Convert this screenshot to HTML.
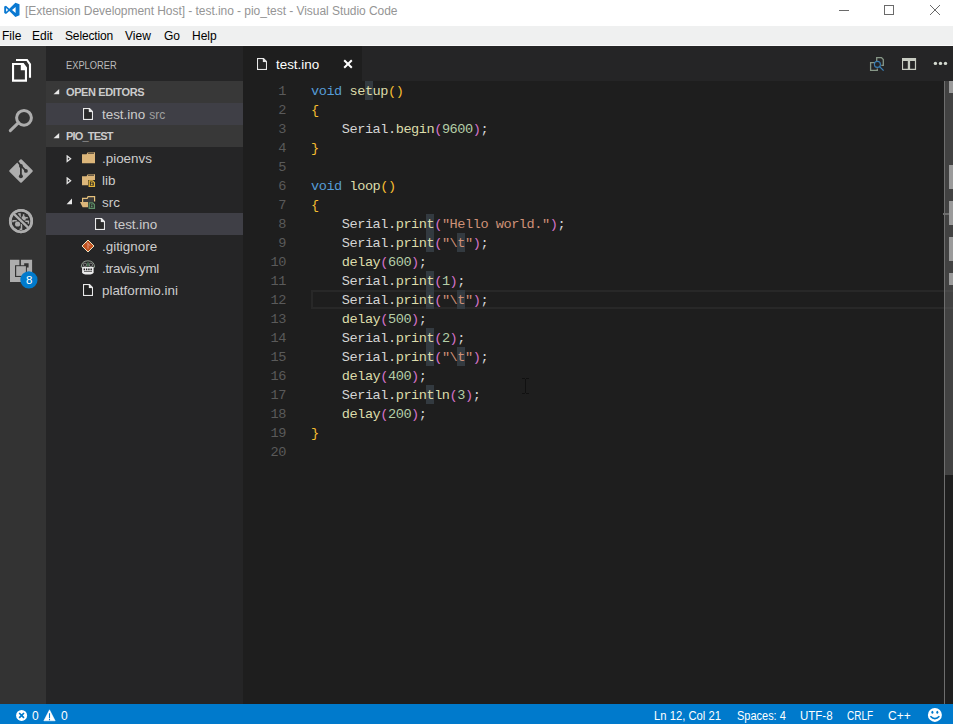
<!DOCTYPE html>
<html><head><meta charset="utf-8">
<style>
*{margin:0;padding:0;box-sizing:border-box}
html,body{width:953px;height:724px;overflow:hidden;background:#1e1e1e;font-family:"Liberation Sans",sans-serif}
.a{position:absolute;white-space:pre}
#title{left:0;top:0;width:953px;height:26px;background:#fff}
#menu{left:0;top:26px;width:953px;height:19px;background:#eff0f0}
#mline{left:0;top:45px;width:953px;height:1px;background:#fafafa}
#act{left:0;top:46px;width:46px;height:658px;background:#333}
#side{left:46px;top:46px;width:197px;height:658px;background:#252526}
#tabs{left:243px;top:46px;width:710px;height:35px;background:#252526}
#tab{left:243px;top:46px;width:119px;height:35px;background:#1e1e1e}
#editor{left:243px;top:81px;width:710px;height:623px;background:#1e1e1e}
#status{left:0;top:704px;width:953px;height:20px;background:#007acc}
.tt{font-size:12px;color:#959595;top:4px;letter-spacing:-0.05px}
.mi{font-size:12px;color:#000;top:29px}
.code{font-family:"Liberation Mono",monospace;font-size:13.6px;letter-spacing:-0.46px;color:#d4d4d4}
.ln{font-family:"Liberation Mono",monospace;font-size:13.6px;letter-spacing:-0.46px;color:#5a5a5a;width:30px;text-align:right;left:256px}
.kw{color:#569cd6}.fn{color:#dcdcaa}.nm{color:#b5cea8}.st{color:#ce9178}.b1{color:#f5bd30}.b2{color:#d572c8}
.sh{font-size:11px;font-weight:bold;color:#cccccc;letter-spacing:-0.4px}
.fi{font-size:13.4px;color:#cccccc}
.hl{width:8px;height:19px;background:#333a40}
.es{color:#d7ba7d}
.code,.ln{line-height:19px;height:19px}
.sb{font-size:12px;color:#fff;top:709px}
</style></head><body>
<div class="a" id="title"></div>
<div class="a" id="menu"></div>
<div class="a" id="mline"></div>
<div class="a" id="act"></div>
<div class="a" id="side"></div>
<div class="a" id="tabs"></div>
<div class="a" id="tab"></div>
<div class="a" id="editor"></div>
<div class="a" id="status"></div>

<!-- title -->
<svg class="a" style="left:0px;top:0px" width="24" height="22" viewBox="0 0 24 22">
<path d="M15.4 2.7 L19.5 4.3 V15.3 L15.4 16.9 L9.3 11.1 L6 13.9 L4.2 13.1 V6.6 L6 5.8 L9.3 8.7 Z M15.6 7 L12 9.9 L15.6 12.9 Z M6.1 8 V11.8 L8.2 9.9 Z" fill="#0a79d2" fill-rule="evenodd"/>
</svg>
<div class="a tt" style="left:25px">[Extension Development Host] - test.ino - pio_test - Visual Studio Code</div>
<!-- window controls -->
<div class="a" style="left:839px;top:10px;width:10px;height:1px;background:#6a6a6a"></div>
<div class="a" style="left:884px;top:5px;width:10px;height:10px;border:1px solid #6a6a6a"></div>
<svg class="a" style="left:929px;top:4px" width="12" height="12" viewBox="0 0 12 12"><path d="M1 1 L11 11 M11 1 L1 11" stroke="#6a6a6a" stroke-width="1"/></svg>

<!-- menu -->
<div class="a mi" style="left:2px">File</div>
<div class="a mi" style="left:32px">Edit</div>
<div class="a mi" style="left:65px;letter-spacing:-0.15px">Selection</div>
<div class="a mi" style="left:125px">View</div>
<div class="a mi" style="left:164px">Go</div>
<div class="a mi" style="left:192px">Help</div>

<!-- sidebar -->
<div class="a" style="left:66px;top:59px;font-size:11px;color:#bbbbbb;transform:scaleX(0.845);transform-origin:0 0">EXPLORER</div>
<div class="a" style="left:46px;top:81px;width:197px;height:22px;background:#383838"></div>
<div class="a" style="left:46px;top:103px;width:197px;height:22px;background:#3f3f46"></div>
<div class="a" style="left:46px;top:125px;width:197px;height:22px;background:#383838"></div>
<div class="a" style="left:46px;top:213px;width:197px;height:22px;background:#3f3f46"></div>
<div class="a sh" style="left:66px;top:86px">OPEN EDITORS</div>
<div class="a sh" style="left:66px;top:130px;letter-spacing:-0.8px">PIO_TEST</div>
<div class="a fi" style="left:102px;top:107px">test.ino<span style="font-size:12px;color:#a0a0a0;margin-left:4px">src</span></div>
<div class="a fi" style="left:102px;top:151px">.pioenvs</div>
<div class="a fi" style="left:102px;top:173px">lib</div>
<div class="a fi" style="left:102px;top:195px">src</div>
<div class="a fi" style="left:114px;top:217px">test.ino</div>
<div class="a fi" style="left:102px;top:239px">.gitignore</div>
<div class="a fi" style="left:102px;top:261px;letter-spacing:-0.3px">.travis.yml</div>
<div class="a fi" style="left:102px;top:283px">platformio.ini</div>

<!-- tab -->
<div class="a fi" style="left:276px;top:57px;color:#fff">test.ino</div>

<!-- editor -->
<div class="a" style="left:311px;top:290px;width:700px;height:19px;border:2px solid #282828"></div>
<div id="lines">
<div class="a hl" style="left:365px;top:81px"></div>
<div class="a hl" style="left:426px;top:214px"></div>
<div class="a hl" style="left:426px;top:233px"></div>
<div class="a hl" style="left:457px;top:233px"></div>
<div class="a hl" style="left:426px;top:271px"></div>
<div class="a hl" style="left:426px;top:290px"></div>
<div class="a hl" style="left:457px;top:290px"></div>
<div class="a hl" style="left:426px;top:328px"></div>
<div class="a hl" style="left:426px;top:347px"></div>
<div class="a hl" style="left:457px;top:347px"></div>
<div class="a hl" style="left:426px;top:385px"></div>
<div class="a ln" style="top:82px">1</div>
<div class="a code" style="left:311px;top:82px"><span class="kw">void</span> <span class="fn">setup</span><span class="b1">()</span></div>
<div class="a ln" style="top:101px">2</div>
<div class="a code" style="left:311px;top:101px"><span class="b1">{</span></div>
<div class="a ln" style="top:120px">3</div>
<div class="a code" style="left:311px;top:120px">    Serial.<span class="fn">begin</span><span class="b2">(</span><span class="nm">9600</span><span class="b2">)</span>;</div>
<div class="a ln" style="top:139px">4</div>
<div class="a code" style="left:311px;top:139px"><span class="b1">}</span></div>
<div class="a ln" style="top:158px">5</div>
<div class="a ln" style="top:177px">6</div>
<div class="a code" style="left:311px;top:177px"><span class="kw">void</span> <span class="fn">loop</span><span class="b1">()</span></div>
<div class="a ln" style="top:196px">7</div>
<div class="a code" style="left:311px;top:196px"><span class="b1">{</span></div>
<div class="a ln" style="top:215px">8</div>
<div class="a code" style="left:311px;top:215px">    Serial.<span class="fn">print</span><span class="b2">(</span><span class="st">"Hello world."</span><span class="b2">)</span>;</div>
<div class="a ln" style="top:234px">9</div>
<div class="a code" style="left:311px;top:234px">    Serial.<span class="fn">print</span><span class="b2">(</span><span class="st">"\t"</span><span class="b2">)</span>;</div>
<div class="a ln" style="top:253px">10</div>
<div class="a code" style="left:311px;top:253px">    <span class="fn">delay</span><span class="b2">(</span><span class="nm">600</span><span class="b2">)</span>;</div>
<div class="a ln" style="top:272px">11</div>
<div class="a code" style="left:311px;top:272px">    Serial.<span class="fn">print</span><span class="b2">(</span><span class="nm">1</span><span class="b2">)</span>;</div>
<div class="a ln" style="top:291px">12</div>
<div class="a code" style="left:311px;top:291px">    Serial.<span class="fn">print</span><span class="b2">(</span><span class="st">"\t"</span><span class="b2">)</span>;</div>
<div class="a ln" style="top:310px">13</div>
<div class="a code" style="left:311px;top:310px">    <span class="fn">delay</span><span class="b2">(</span><span class="nm">500</span><span class="b2">)</span>;</div>
<div class="a ln" style="top:329px">14</div>
<div class="a code" style="left:311px;top:329px">    Serial.<span class="fn">print</span><span class="b2">(</span><span class="nm">2</span><span class="b2">)</span>;</div>
<div class="a ln" style="top:348px">15</div>
<div class="a code" style="left:311px;top:348px">    Serial.<span class="fn">print</span><span class="b2">(</span><span class="st">"\t"</span><span class="b2">)</span>;</div>
<div class="a ln" style="top:367px">16</div>
<div class="a code" style="left:311px;top:367px">    <span class="fn">delay</span><span class="b2">(</span><span class="nm">400</span><span class="b2">)</span>;</div>
<div class="a ln" style="top:386px">17</div>
<div class="a code" style="left:311px;top:386px">    Serial.<span class="fn">println</span><span class="b2">(</span><span class="nm">3</span><span class="b2">)</span>;</div>
<div class="a ln" style="top:405px">18</div>
<div class="a code" style="left:311px;top:405px">    <span class="fn">delay</span><span class="b2">(</span><span class="nm">200</span><span class="b2">)</span>;</div>
<div class="a ln" style="top:424px">19</div>
<div class="a code" style="left:311px;top:424px"><span class="b1">}</span></div>
<div class="a ln" style="top:443px">20</div>
</div><!--/lines-->


<!-- activity bar icons -->
<svg class="a" style="left:8px;top:56px" width="28" height="28" viewBox="0 0 28 28">
<path d="M8 4 H19 L22 8.3 V21.8" fill="none" stroke="#fff" stroke-width="2.1"/>
<path d="M4 7 H15.6 L19 11.6 V25.7 H4 Z M6.1 9.1 V23.6 H16.9 V14.3 H12.8 V9.1 Z" fill="#fff" fill-rule="evenodd"/>
</svg>
<svg class="a" style="left:6px;top:106px" width="30" height="30" viewBox="0 0 30 30">
<circle cx="18" cy="11.8" r="7.4" fill="none" stroke="#adadad" stroke-width="3"/>
<path d="M4.3 24.6 L12.5 16.6" stroke="#adadad" stroke-width="3" stroke-linecap="round"/>
</svg>
<svg class="a" style="left:6px;top:156px" width="30" height="30" viewBox="0 0 30 30">
<path d="M14.3 3.5 Q15 2.8 15.7 3.5 L26.5 14.3 Q27.2 15 26.5 15.7 L15.7 26.5 Q15 27.2 14.3 26.5 L3.5 15.7 Q2.8 15 3.5 14.3 Z" fill="#adadad"/>
<path d="M11.4 5.2 L14.9 9.7 V20.3 M14.9 9.7 L19.9 14.9" stroke="#333" stroke-width="1.8" fill="none"/>
<circle cx="14.9" cy="9.9" r="1.9" fill="#333"/>
<circle cx="14.9" cy="20.3" r="2" fill="#333"/>
<circle cx="19.9" cy="14.9" r="1.9" fill="#333"/>
</svg>
<svg class="a" style="left:6px;top:206px" width="30" height="30" viewBox="0 0 30 30">
<circle cx="15" cy="15.1" r="10.8" fill="none" stroke="#adadad" stroke-width="2.5"/>
<path d="M12.2 8 H14 V12.2 M17.6 8.2 V10.5 M19.2 11.8 H21.8 M19.2 15.2 H22.4 V17.8 M6.4 14.8 H10.8 M7 14.8 V16.2 M15.5 18 V23.2 H13.6" stroke="#adadad" stroke-width="1.5" fill="none"/>
<circle cx="17.6" cy="12.4" r="2.3" fill="#adadad"/>
<circle cx="11.6" cy="18" r="2.6" fill="#adadad"/>
<path d="M7.6 7.6 L22.4 21.8" stroke="#333" stroke-width="4.2"/>
<path d="M7.6 7.6 L22.4 21.8" stroke="#adadad" stroke-width="2.3"/>
<circle cx="15" cy="15.1" r="10.8" fill="none" stroke="#adadad" stroke-width="2.5"/>
</svg>
<svg class="a" style="left:6px;top:254px" width="34" height="36" viewBox="0 0 34 36">
<path d="M4 5.7 H13.4 V11.2 H9 V22.9 H20.9 V13.4 H22.6 V9.2 H18.2 V11.2 H14.9 V5.7 H26.1 V27.9 H4 Z" fill="#adadad"/>
<rect x="10.2" y="12.2" width="9.7" height="9.7" fill="#adadad"/>
<circle cx="22.9" cy="25.9" r="8.6" fill="#007acc"/>
</svg>
<div class="a" style="left:26px;top:274px;font-size:11.5px;color:#fff">8</div>

<!-- sidebar icons -->
<svg class="a" style="left:53px;top:89px" width="7" height="6" viewBox="0 0 7 6"><path d="M0.5 5.2 H6.2 V0 Z" fill="#e8e8e8"/></svg>
<svg class="a" style="left:53px;top:133px" width="7" height="6" viewBox="0 0 7 6"><path d="M0.5 5.2 H6.2 V0 Z" fill="#e8e8e8"/></svg>
<svg class="a" style="left:66px;top:155px" width="6" height="8" viewBox="0 0 6 8"><path d="M1.2 1 L4.6 3.7 L1.2 6.4 Z" fill="none" stroke="#e4e4e4" stroke-width="1.3"/></svg>
<svg class="a" style="left:66px;top:177px" width="6" height="8" viewBox="0 0 6 8"><path d="M1.2 1 L4.6 3.7 L1.2 6.4 Z" fill="none" stroke="#e4e4e4" stroke-width="1.3"/></svg>
<svg class="a" style="left:66px;top:198px" width="7" height="7" viewBox="0 0 7 7"><path d="M0.6 6.2 H6 V0.6 Z" fill="#e8e8e8"/></svg>

<svg class="a" style="left:82.5px;top:107.5px" width="11" height="13" viewBox="0 0 11 13">
<path d="M0 0 H6.8 L10 3.2 V12 H0 Z M1.2 1.2 V10.8 H8.8 V4.3 H5.6 V1.2 Z" fill="#e8e8e8" fill-rule="evenodd"/><path d="M1.2 1.2 V10.8 H8.8 V4.3 H5.6 V1.2 Z" fill="#2a2a2a"/></svg><svg class="a" style="left:94.5px;top:217.5px" width="11" height="13" viewBox="0 0 11 13">
<path d="M0 0 H6.8 L10 3.2 V12 H0 Z M1.2 1.2 V10.8 H8.8 V4.3 H5.6 V1.2 Z" fill="#e8e8e8" fill-rule="evenodd"/><path d="M1.2 1.2 V10.8 H8.8 V4.3 H5.6 V1.2 Z" fill="#2a2a2a"/></svg><svg class="a" style="left:82.5px;top:284px" width="11" height="13" viewBox="0 0 11 13">
<path d="M0 0 H6.8 L10 3.2 V12 H0 Z M1.2 1.2 V10.8 H8.8 V4.3 H5.6 V1.2 Z" fill="#e8e8e8" fill-rule="evenodd"/><path d="M1.2 1.2 V10.8 H8.8 V4.3 H5.6 V1.2 Z" fill="#222222"/></svg><svg class="a" style="left:81px;top:152px" width="15" height="13" viewBox="0 0 15 13">
<path d="M1 2.2 H5.5 L6.8 0.2 H14 V11.2 H1 Z" fill="#dcb67a"/><path d="M7 1.2 H13" stroke="#252526" stroke-width="0.9"/></svg><svg class="a" style="left:81px;top:174px" width="15" height="13" viewBox="0 0 15 13">
<path d="M1 2.2 H5.5 L6.8 0.2 H14 V11.2 H1 Z" fill="#dcb67a"/><path d="M7 1.2 H13" stroke="#252526" stroke-width="0.9"/></svg><svg class="a" style="left:88px;top:179.5px" width="8" height="8" viewBox="0 0 8 8">
<rect x="-0.2" y="-0.2" width="7.4" height="7.4" fill="#252526"/>
<path d="M1.2 0.8 H4.6 L6.4 2.6 V6.4 H1.2 Z" fill="none" stroke="#e5b53a" stroke-width="1.3"/>
<path d="M2.8 2.9 H4.6 M2.8 4.6 H4.6" stroke="#e5b53a" stroke-width="1.1"/></svg><svg class="a" style="left:79px;top:195px" width="17" height="13" viewBox="0 0 17 13">
<path d="M3.6 8.5 V3.4 H8.2 L9 1.6 H15.6 V6.4" fill="#3a3a3a" stroke="#e5c07b" stroke-width="1.2"/>
<path d="M1 7 H11 V12.2 H3.6 Z" fill="#dcb67a"/></svg><svg class="a" style="left:88px;top:201.5px" width="8" height="8" viewBox="0 0 8 8">
<rect x="-0.2" y="-0.2" width="7.4" height="7.4" fill="#252526"/>
<path d="M1.2 0.8 H4.6 L6.4 2.6 V6.4 H1.2 Z" fill="none" stroke="#5f9068" stroke-width="1.3"/>
<path d="M2.8 2.9 H4.6 M2.8 4.6 H4.6" stroke="#5f9068" stroke-width="1.1"/></svg><svg class="a" style="left:81px;top:239px" width="14" height="14" viewBox="0 0 14 14">
<path d="M7 1 L13 7 L7 13 L1 7 Z" fill="#c0521f" stroke="#ede3c0" stroke-width="1"/>
<path d="M5.6 3.2 L9.2 6.8 M7 4.6 V9.6" stroke="#e29a86" stroke-width="1"/></svg><svg class="a" style="left:78px;top:258px" width="20" height="20" viewBox="0 0 20 20">
<path d="M3.2 9.2 Q3.4 2.9 9.9 2.8 Q16.4 2.9 16.6 9.2 Z" fill="#262626" stroke="#8e9a8e" stroke-width="1"/>
<circle cx="6.9" cy="6.8" r="1.7" fill="none" stroke="#8a8a8a" stroke-width="0.9"/>
<circle cx="12.9" cy="6.8" r="1.7" fill="none" stroke="#8a8a8a" stroke-width="0.9"/>
<rect x="9.2" y="4.4" width="1.6" height="4" fill="#4d7a58"/>
<path d="M4.1 9 H15.6 V14.2 Q15.4 16.6 9.9 16.6 Q4.3 16.6 4.1 14.2 Z" fill="#ececec"/>
<path d="M5.6 11.4 H14.4" stroke="#1e1e1e" stroke-width="1.7" stroke-dasharray="1.4 0.9"/>
<path d="M6 13.4 H14" stroke="#3a3a3a" stroke-width="0.8"/>
</svg>
<div class="a" style="left:525px;top:379px;width:1px;height:14px;background:#111"></div>
<div class="a" style="left:522px;top:378px;width:3px;height:1px;background:#111"></div>
<div class="a" style="left:526px;top:378px;width:3px;height:1px;background:#111"></div>
<div class="a" style="left:522px;top:393px;width:3px;height:1px;background:#111"></div>
<div class="a" style="left:526px;top:393px;width:3px;height:1px;background:#111"></div><svg class="a" style="left:256.5px;top:57.5px" width="11" height="13" viewBox="0 0 11 13">
<path d="M0 0 H6.8 L10 3.2 V12 H0 Z M1.2 1.2 V10.8 H8.8 V4.3 H5.6 V1.2 Z" fill="#e8e8e8" fill-rule="evenodd"/><path d="M1.2 1.2 V10.8 H8.8 V4.3 H5.6 V1.2 Z" fill="#262626"/></svg><svg class="a" style="left:343px;top:59px" width="10" height="10" viewBox="0 0 10 10"><path d="M1.2 1.2 L8.8 8.8 M8.8 1.2 L1.2 8.8" stroke="#fff" stroke-width="2"/></svg><svg class="a" style="left:866px;top:52px" width="24" height="24" viewBox="0 0 24 24">
<path d="M10.7 9.5 V5.6 H15.5 L17.3 7.5 V13.3 H15.3" fill="none" stroke="#879787" stroke-width="1.3"/>
<path d="M9 10.6 H4.6 V18.4 H11.3 V16.5" fill="none" stroke="#879787" stroke-width="1.3"/>
<circle cx="11.4" cy="12.4" r="3" fill="none" stroke="#3a7fb5" stroke-width="1.1"/>
<path d="M13.6 14.6 L17.6 18.6" stroke="#3a7fb5" stroke-width="1.3"/></svg><svg class="a" style="left:898px;top:52px" width="24" height="24" viewBox="0 0 24 24">
<path d="M4 6 H18.1 V18.1 H4 Z M5.1 9 V16.7 H9.8 V9 Z M12.1 9 V16.7 H16.9 V9 Z" fill="#c8ccc2" fill-rule="evenodd"/></svg><svg class="a" style="left:928px;top:54px" width="24" height="18" viewBox="0 0 24 18">
<circle cx="7.4" cy="9.4" r="1.7" fill="#d4dad0"/><circle cx="12.5" cy="9.4" r="1.7" fill="#d4dad0"/><circle cx="17.5" cy="9.4" r="1.7" fill="#d4dad0"/></svg><div class="a" style="left:944px;top:81px;width:1px;height:623px;background:#6e6e6e"></div>
<div class="a" style="left:945px;top:81px;width:8px;height:394px;background:rgba(121,121,121,0.4)"></div>
<div class="a" style="left:949px;top:81px;width:4px;height:12px;background:#9b9b9b"></div>
<div class="a" style="left:949px;top:165px;width:4px;height:24px;background:#9b9b9b"></div>
<div class="a" style="left:949px;top:201px;width:4px;height:24px;background:#9b9b9b"></div>
<div class="a" style="left:949px;top:237px;width:4px;height:24px;background:#9b9b9b"></div>
<div class="a" style="left:949px;top:273px;width:4px;height:12px;background:#9b9b9b"></div>
<div class="a" style="left:943px;top:213px;width:6px;height:2px;background:#6e6e6e"></div>
<svg class="a" style="left:14px;top:708px" width="16" height="15" viewBox="0 0 16 15">
<circle cx="7.6" cy="7.4" r="5.5" fill="#fff"/><path d="M5.2 5 L10 9.8 M10 5 L5.2 9.8" stroke="#007acc" stroke-width="1.7"/></svg>
<svg class="a" style="left:42px;top:708px" width="16" height="15" viewBox="0 0 16 15">
<path d="M7.5 1.8 L13.2 12.8 H1.8 Z" fill="#fff" stroke="#fff" stroke-width="0.5" stroke-linejoin="round"/>
<path d="M7.5 5.2 V10.3 M7.5 11.1 V12.2" stroke="#007acc" stroke-width="1.1"/></svg>
<svg class="a" style="left:926px;top:706px" width="18" height="18" viewBox="0 0 18 18">
<circle cx="8.9" cy="8.9" r="7" fill="#fff"/>
<ellipse cx="6.4" cy="6.2" rx="1" ry="1.5" fill="#007acc"/><ellipse cx="11.3" cy="6.2" rx="1" ry="1.5" fill="#007acc"/>
<path d="M4.4 10.2 Q8.9 15 13.4 10.2" fill="none" stroke="#007acc" stroke-width="1.6"/></svg>

<!-- status -->
<div class="a sb" style="left:32px">0</div>
<div class="a sb" style="left:61px">0</div>
<div class="a sb" style="left:654px;transform:scaleX(0.937);transform-origin:0 0">Ln 12, Col 21</div>
<div class="a sb" style="left:737px;transform:scaleX(0.915);transform-origin:0 0">Spaces: 4</div>
<div class="a sb" style="left:800px;transform:scaleX(0.958);transform-origin:0 0">UTF-8</div>
<div class="a sb" style="left:847px;transform:scaleX(0.832);transform-origin:0 0">CRLF</div>
<div class="a sb" style="left:888px">C++</div>
</body></html>
